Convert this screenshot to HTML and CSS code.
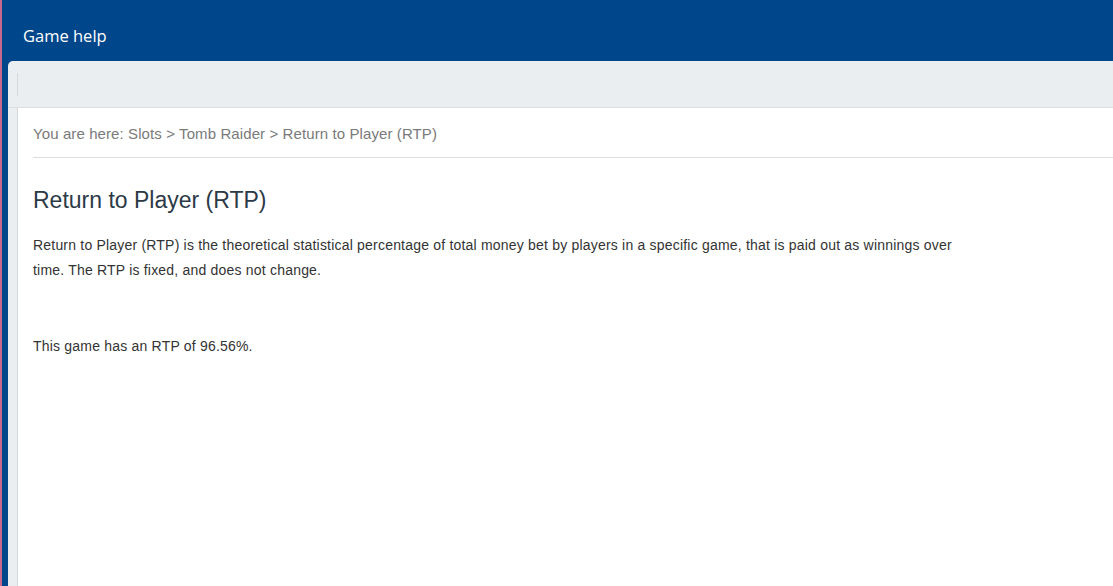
FILE: index.html
```html
<!DOCTYPE html>
<html lang="en">
<head>
    <meta charset="UTF-8">
    <title>Game help</title>
    <link rel="stylesheet" href="styles.css">
</head>
<body>
    <div class="app">
        <header class="topbar">
            <h1>Game help</h1>
        </header>
        <div class="panel">
            <div class="toolbar">
                <span class="divider"></span>
            </div>
            <div class="content">
                <div class="breadcrumb">You are here: Slots &gt; Tomb Raider &gt; Return to Player (RTP)</div>
                <div class="article">
                    <h2>Return to Player (RTP)</h2>
                    <p>Return to Player (RTP) is the theoretical statistical percentage of total money bet by players in a specific game, that is paid out as winnings over time. The RTP is fixed, and does not change.</p>
                    <p class="rtp">This game has an RTP of 96.56%.</p>
                </div>
            </div>
        </div>
    </div>
</body>
</html>
```

FILE: styles.css
```css
html, body {
    height: 100%;
}
body {
    margin: 0;
    padding: 0 0 0 2px;
    background-color: #c8688a;
    font-family: 'Liberation Sans', Arial, sans-serif;
    color: #333;
    overflow: hidden;
}
.app {
    height: 100%;
    background-color: #00468b;
    display: flex;
    flex-direction: column;
}
.topbar {
    height: 61px;
    flex-shrink: 0;
    display: flex;
    align-items: center;
    padding-left: 21px;
}
.topbar h1 {
    margin: 0;
    font-family: 'Open Sans', sans-serif;
    font-weight: 400;
    font-size: 16.5px;
    color: #fff;
    padding-top: 10px;
}
.panel {
    flex: 1;
    margin-left: 6px;
    background-color: #ebeef1;
    border-top-left-radius: 5px;
    display: flex;
    flex-direction: column;
}
.toolbar {
    height: 46px;
    flex-shrink: 0;
    border-bottom: 1px solid #dcdfe2;
    padding-left: 9px;
    display: flex;
    align-items: center;
}
.divider {
    width: 1px;
    height: 23px;
    background-color: #d6d9dc;
}
.content {
    flex: 1;
    margin-left: 9px;
    background-color: #fff;
    border-left: 1px solid #d6d9dc;
    padding-left: 15px;
}
.breadcrumb {
    font-size: 15px;
    letter-spacing: 0.1px;
    color: #7a7a7a;
    padding: 17px 0 15px;
    border-bottom: 1px solid #ddd;
}
.article {
    max-width: 928px;
}
.article h2 {
    margin: 29px 0 0;
    font-size: 23px;
    font-weight: 400;
    color: #2c3a47;
}
.article p {
    font-size: 14px;
    line-height: 25px;
    letter-spacing: 0.2px;
    margin: 19px 0 0;
}
.article p.rtp {
    margin-top: 51px;
}
```
